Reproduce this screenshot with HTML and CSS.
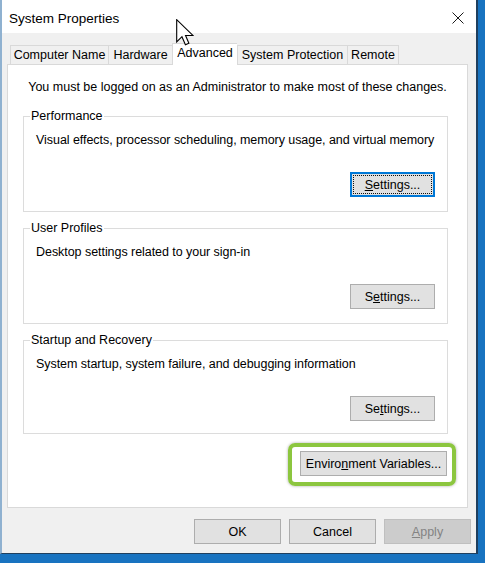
FILE: index.html
```html
<!DOCTYPE html>
<html lang="en">
<head>
  <meta charset="UTF-8" />
  <meta name="viewport" content="width=device-width, initial-scale=1.0"/>
  <title>System Properties</title>
  <link rel="stylesheet" href="styles.css">
</head>
<body>
  <div class="desktop">
    <div class="window">
      <div class="titlebar">
        <span class="title">System Properties</span>
        <span class="close">
          <svg width="12" height="12" viewBox="0 0 12 12">
            <path d="M0.5 0.5 L11.5 11.5 M11.5 0.5 L0.5 11.5" stroke="#1a1a1a" stroke-width="1" fill="none"/>
          </svg>
        </span>
      </div>

      <div class="tabs">
        <div class="tab tab-name">Computer Name</div>
        <div class="tab tab-hw">Hardware</div>
        <div class="tab tab-adv active">Advanced</div>
        <div class="tab tab-sys">System Protection</div>
        <div class="tab tab-rem">Remote</div>
      </div>

      <div class="panel">
        <p class="note">You must be logged on as an Administrator to make most of these changes.</p>

        <fieldset class="group">
          <legend>Performance</legend>
          <p class="desc">Visual effects, processor scheduling, memory usage, and virtual memory</p>
          <div class="group-actions">
            <button class="btn btn-settings focused"><u>S</u>ettings...</button>
          </div>
        </fieldset>

        <fieldset class="group">
          <legend>User Profiles</legend>
          <p class="desc">Desktop settings related to your sign-in</p>
          <div class="group-actions">
            <button class="btn btn-settings">S<u>e</u>ttings...</button>
          </div>
        </fieldset>

        <fieldset class="group group-last">
          <legend>Startup and Recovery</legend>
          <p class="desc">System startup, system failure, and debugging information</p>
          <div class="group-actions">
            <button class="btn btn-settings">Se<u>t</u>tings...</button>
          </div>
        </fieldset>

        <div class="env-row">
          <span class="highlight">
            <button class="btn btn-env">Enviro<u>n</u>ment Variables...</button>
          </span>
        </div>
      </div>

      <div class="footer">
        <button class="btn btn-main">OK</button>
        <button class="btn btn-main">Cancel</button>
        <button class="btn btn-main" disabled><u>A</u>pply</button>
      </div>
    </div>

    <!-- mouse pointer over the title bar -->
    <svg class="cursor" width="18" height="27" viewBox="0 0 13 19.5">
      <path d="M0.5 0.5 L0.5 16.5 L4.3 12.8 L6.8 18.6 L9.3 17.5 L6.9 11.9 L12.2 11.9 Z" fill="#fff" stroke="#000" stroke-width="0.8" stroke-linejoin="miter"/>
    </svg>
  </div>
</body>
</html>
```

FILE: styles.css
```css
* {
  box-sizing: border-box;
}
body {
  margin: 0;
  background: #1873c0;
  font-family: "Liberation Sans", Arial, sans-serif;
  font-size: 12.5px;
  color: #000;
}
.desktop {
  position: relative;
  width: 485px;
  height: 563px;
  overflow: hidden;
}
.window {
  width: 478px;
  height: 554px;
  background: #f0f0f0;
  border-left: 2px solid #8fb1d0;
  border-right: 2px solid #1f3f5e;
  border-bottom: 1px solid #1f3f5e;
}
.titlebar {
  height: 33px;
  background: #fff;
  display: flex;
  align-items: center;
  justify-content: space-between;
  padding: 0 12px 0 7px;
}
.title {
  font-size: 13.5px;
  margin-top: 3px;
}
.close {
  display: flex;
  margin-top: 2px;
}

/* tab strip */
.tabs {
  display: flex;
  align-items: flex-end;
  height: 21px;
  margin-top: 10px;
  padding-left: 8px;
}
.tab {
  height: 19px;
  background: #f0f0f0;
  border: 1px solid #d9d9d9;
  border-bottom: none;
  border-right: none;
  text-align: center;
  line-height: 18px;
}
.tab-name { width: 98px; }
.tab-hw { width: 64px; }
.tab-adv { width: 65px; }
.tab-sys { width: 110px; }
.tab-rem { width: 52px; border-right: 1px solid #d9d9d9; }
.tab.active {
  height: 22px;
  background: #fff;
  position: relative;
  margin-bottom: -1px;
  line-height: 19px;
}
.tab.active + .tab {
  border-left: 1px solid #d9d9d9;
}

.panel {
  width: 461px;
  height: 444px;
  margin-left: 5px;
  background: #fff;
  border: 1px solid #d9d9d9;
}
.note {
  margin: 15px 0 14px;
  text-align: center;
  line-height: 15px;
}

/* group boxes */
.group {
  margin: 0 19px 9px 15px;
  padding: 9px 12px 14px;
  border: 1px solid #dcdcdc;
  min-width: 0;
}
.group-last {
  padding-bottom: 12px;
}
.group legend {
  padding: 0 1px;
  margin-left: -6px;
  line-height: 15px;
}
.desc {
  margin: 0;
  line-height: 15px;
  white-space: nowrap;
  letter-spacing: -0.05px;
}
.group-actions {
  display: flex;
  justify-content: flex-end;
  margin-top: 24px;
}

/* buttons */
.btn {
  height: 25px;
  padding: 0;
  background: #e1e1e1;
  border: 1px solid #adadad;
  font-family: inherit;
  font-size: 12.5px;
  color: #000;
}
.btn-settings {
  width: 85px;
}
.btn.focused {
  border-color: #0078d7;
  box-shadow: inset 0 0 0 1px #0078d7;
  outline: 1px dotted #111;
  outline-offset: -4px;
}
.env-row {
  display: flex;
  justify-content: flex-end;
  padding-right: 11px;
  margin-top: 2px;
}
.highlight {
  display: flex;
  padding: 4px 5px 6px 8px;
  border: 4px solid #8cc63f;
  border-radius: 7px;
  box-shadow: 0 0 3px rgba(0, 0, 0, 0.35);
}
.btn-env {
  width: 147px;
}

.footer {
  display: flex;
  justify-content: flex-end;
  gap: 8px;
  margin-top: 11px;
  padding-right: 5px;
}
.btn-main {
  width: 87px;
}
.btn-main:disabled {
  background: #cccccc;
  border-color: #bfbfbf;
  color: #838383;
}

.cursor {
  position: absolute;
  left: 176px;
  top: 19px;
}
```
